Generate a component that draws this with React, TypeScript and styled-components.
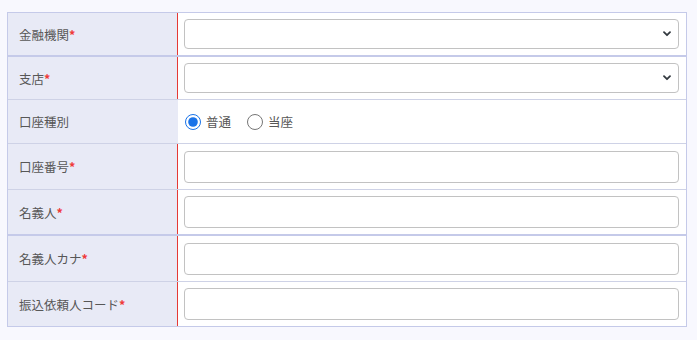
import React from "react";
import styled, { createGlobalStyle } from "styled-components";

const GlobalStyle = createGlobalStyle`
    html, body {
        margin: 0;
        padding: 0;
        background: #f8f8fe;
    }
    body {
        font-family: "Noto Sans CJK JP", "Noto Sans", sans-serif;
    }
`

const Page = styled.div`
    padding: 12px 10px 13px 7px;
`
const Table = styled.div`
    border: 1px solid #c5cae9;
    background: #fff;
`
const Row = styled.div<{ thick?: boolean; last?: boolean }>`
    display: grid;
    grid-template-columns: 170px 1fr;
    border-bottom: ${props => props.last ? "none" : props.thick ? "2px solid #c5cae9" : "1px solid #ced2e6"};
`
const Label = styled.div<{ required?: boolean }>`
    display: flex;
    align-items: center;
    padding-left: 11px;
    background: #e8eaf6;
    font-size: 12.5px;
    color: #575757;
    box-shadow: ${props => props.required ? "inset -1px 0 0 #e53935" : "none"};
`
const Mark = styled.span`
    color: #ef3b3b;
    font-weight: 700;
`
const Value = styled.div<{ h: number }>`
    display: flex;
    align-items: center;
    height: ${props => props.h}px;
    padding: 0 7px 0 6px;
`
const SelectWrap = styled.div`
    position: relative;
    flex: 1;
    height: 30px;
`
const Select = styled.select`
    appearance: none;
    width: 100%;
    height: 30px;
    box-sizing: border-box;
    border: 1px solid #c2c2c2;
    border-radius: 4px;
    background: #fff;
    font: inherit;
`
const Chevron = styled.svg`
    position: absolute;
    right: 8px;
    top: 12px;
    pointer-events: none;
`
const Input = styled.input`
    flex: 1;
    height: 32px;
    box-sizing: border-box;
    border: 1px solid #c2c2c2;
    border-radius: 4px;
    background: #fff;
    font: inherit;
`
const RadioGroup = styled.div`
    display: flex;
    align-items: center;
    gap: 16px;
    padding-left: 1px;
`
const RadioLabel = styled.label`
    display: flex;
    align-items: center;
    gap: 5px;
    font-size: 12.5px;
    color: #575757;
`
const Radio = styled.input`
    width: 16px;
    height: 16px;
    margin: 0;
    accent-color: #1a73e8;
`

const SelectField = () => (
    <SelectWrap>
        <Select defaultValue="">
            <option value=""></option>
        </Select>
        <Chevron width="8" height="6" viewBox="0 0 8 6">
            <path d="M1 1.2 4 4.2 7 1.2" fill="none" stroke="#343a40" strokeWidth="1.8" strokeLinecap="round" strokeLinejoin="round" />
        </Chevron>
    </SelectWrap>
)

const textRows: { label: string; h: number; thick?: boolean; last?: boolean }[] = [
    { label: "口座番号", h: 45 },
    { label: "名義人", h: 44, thick: true },
    { label: "名義人カナ", h: 45 },
    { label: "振込依頼人コード", h: 44, last: true },
]

export default function App() {
    return (
        <>
            <GlobalStyle />
            <Page>
                <Table>
                    <Row thick>
                        <Label required>金融機関<Mark>*</Mark></Label>
                        <Value h={42}><SelectField /></Value>
                    </Row>
                    <Row>
                        <Label required>支店<Mark>*</Mark></Label>
                        <Value h={42}><SelectField /></Value>
                    </Row>
                    <Row>
                        <Label>口座種別</Label>
                        <Value h={43}>
                            <RadioGroup>
                                <RadioLabel><Radio type="radio" name="kind" defaultChecked />普通</RadioLabel>
                                <RadioLabel><Radio type="radio" name="kind" />当座</RadioLabel>
                            </RadioGroup>
                        </Value>
                    </Row>
                    {textRows.map(r => (
                        <Row key={r.label} thick={r.thick} last={r.last}>
                            <Label required>{r.label}<Mark>*</Mark></Label>
                            <Value h={r.h}><Input type="text" /></Value>
                        </Row>
                    ))}
                </Table>
            </Page>
        </>
    )
}
